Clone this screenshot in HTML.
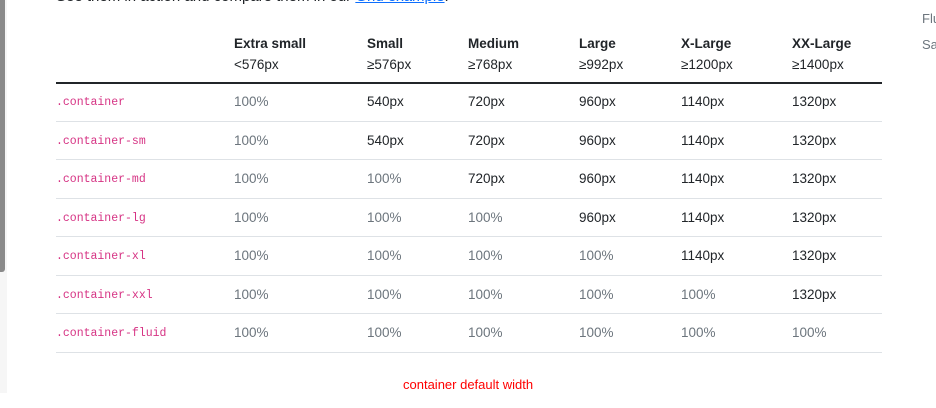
<!DOCTYPE html>
<html><head><style>
body{margin:0;width:936px;height:408px;background:#fff;position:relative;overflow:hidden;font-family:"Liberation Sans",sans-serif;color:#212529}
.sb{position:absolute;left:0;top:0;width:7px;height:393px;background:#f6f6f6}
.sbt{position:absolute;left:0;top:0;width:5px;height:272px;background:#8a8a8a;border-radius:0 0 3px 0}
.top{position:absolute;left:56px;top:-12px;font-size:15px}
.top a{color:#0d6efd;text-decoration:underline}
.t{position:absolute;font-size:13.5px;white-space:nowrap}
.h{font-weight:bold}
.c{font-family:"Liberation Mono",monospace;font-size:11.5px;color:#d63384}
.g{color:#6c757d}
.line{position:absolute;left:56px;width:826px;height:1px;background:#dee2e6}
.side{position:absolute;left:922px;font-size:13px;color:#6c757d}
</style></head><body>
<div class="sb"></div><div class="sbt"></div>
<div class="top">See them in action and compare them in our <a>Grid example</a>.</div>
<div class="side" style="top:11px">Flu</div>
<div class="side" style="top:37px">Sa</div>
<div class="line" style="top:82px;height:1.5px;background:#212529"></div>
<div id="tbl"></div>
<div class="t" style="left:403px;top:377px;color:#f00;font-size:13px">container default width</div>
<script>
var cols=[234,367,468,579,681,792];
var hd=[["Extra small","<576px"],["Small","≥576px"],["Medium","≥768px"],["Large","≥992px"],["X-Large","≥1200px"],["XX-Large","≥1400px"]];
var h="";
hd.forEach(function(x,i){h+='<div class="t h" style="left:'+cols[i]+'px;top:36px">'+x[0]+'</div><div class="t" style="left:'+cols[i]+'px;top:57px">'+x[1]+'</div>';});
var names=[".container",".container-sm",".container-md",".container-lg",".container-xl",".container-xxl",".container-fluid"];
var vals=["540px","720px","960px","1140px","1320px"];
names.forEach(function(n,r){
 var y=94+r*38.5;
 h+='<div class="t c" style="left:56px;top:'+(y+2)+'px">'+n+'</div>';
 h+='<div class="t g" style="left:234px;top:'+y+'px">100%</div>';
 for(var i=0;i<5;i++){var full=i<r-1;h+='<div class="t'+(full?' g':'')+'" style="left:'+cols[i+1]+'px;top:'+y+'px">'+(full?'100%':vals[i])+'</div>';}
 h+='<div class="line" style="top:'+Math.round(y+26.5)+'px"></div>';
});
document.getElementById("tbl").innerHTML=h;
</script>
</body></html>
